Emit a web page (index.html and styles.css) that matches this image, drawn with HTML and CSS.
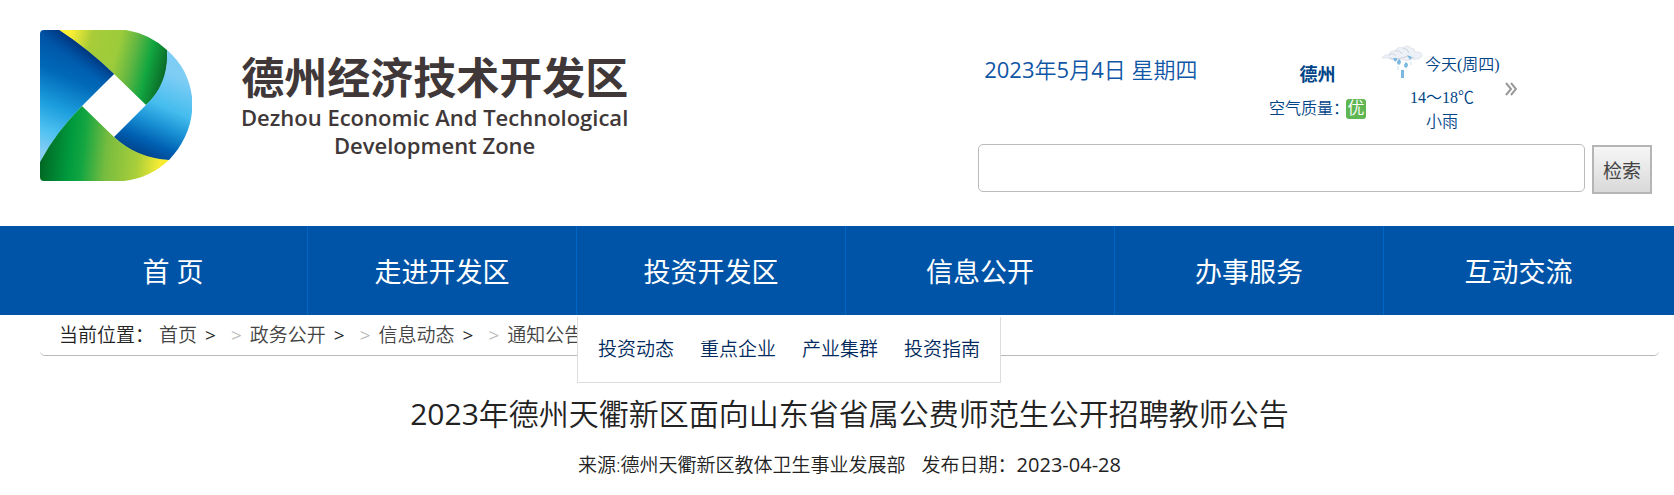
FILE: index.html
```html
<!DOCTYPE html>
<html lang="zh-CN">
<head>
<meta charset="utf-8">
<title>德州经济技术开发区</title>
<link rel="stylesheet" href="styles.css">
</head>
<body>
<header class="header">
  <div class="brand">
    <svg class="brand-mark" viewBox="0 0 152 151" aria-hidden="true">
      <defs>
        <linearGradient id="blueLeft" gradientUnits="userSpaceOnUse" x1="46" y1="18" x2="2" y2="122">
          <stop offset="0" stop-color="#0050a2"/><stop offset="0.3" stop-color="#0068b8"/><stop offset="0.58" stop-color="#1b9ddd"/><stop offset="0.8" stop-color="#4cc0f0"/><stop offset="1" stop-color="#86cef4"/>
        </linearGradient>
        <linearGradient id="blueEdge" gradientUnits="userSpaceOnUse" x1="50" y1="20" x2="38" y2="36">
          <stop offset="0" stop-color="#002b6e" stop-opacity="0.9"/><stop offset="1" stop-color="#004a9e" stop-opacity="0"/>
        </linearGradient>
        <linearGradient id="greenTop" gradientUnits="userSpaceOnUse" x1="20" y1="20" x2="124" y2="46">
          <stop offset="0.05" stop-color="#fff033"/><stop offset="0.26" stop-color="#a8cc38"/><stop offset="0.52" stop-color="#9ccb3b"/><stop offset="0.68" stop-color="#5fb642"/><stop offset="0.83" stop-color="#12a640"/><stop offset="1" stop-color="#0b6b28"/>
        </linearGradient>
        <linearGradient id="blueRight" gradientUnits="userSpaceOnUse" x1="132" y1="34" x2="92" y2="126">
          <stop offset="0.1" stop-color="#7dcdf5"/><stop offset="0.42" stop-color="#45bdee"/><stop offset="0.62" stop-color="#1990d4"/><stop offset="0.8" stop-color="#0060b2"/><stop offset="1" stop-color="#003b83"/>
        </linearGradient>
        <linearGradient id="greenBottom" gradientUnits="userSpaceOnUse" x1="0" y1="110" x2="129" y2="122">
          <stop offset="0" stop-color="#006420"/><stop offset="0.24" stop-color="#009b3e"/><stop offset="0.34" stop-color="#14a642"/><stop offset="0.52" stop-color="#76bc3f"/><stop offset="0.76" stop-color="#a9ce3a"/><stop offset="0.94" stop-color="#f8ec33"/>
        </linearGradient>
      </defs>
      <path d="M19 0H86Q110 4 127 20Q130 54 106 75L74 44Q46 18 19 0Z" fill="url(#greenTop)"/>
      <path d="M4 0H19Q48 19 74 44L42 76Q18 100 0 132V4Q0 0 4 0Z" fill="url(#blueLeft)"/>
      <path d="M4 0H19Q48 19 74 44L60 58Q34 30 4 14Z" fill="url(#blueEdge)"/>
      <path d="M127 20C160 48 161 97 129 130Q98 130 74 107L106 75Q129 53 127 20Z" fill="url(#blueRight)"/>
      <path d="M42 76L74 107Q97 128 129 130Q110 148 84 151H4Q0 151 0 147V132Q16 102 42 76Z" fill="url(#greenBottom)"/>
    </svg>
    <div class="brand-text">
      <div class="brand-name">德州经济技术开发区</div>
      <div class="brand-en">Dezhou Economic And Technological<br>Development Zone</div>
    </div>
  </div>
  <div class="tools">
    <div class="info">
      <div class="date"><span class="num">2023</span>年<span class="num">5</span>月<span class="num">4</span>日 星期四</div>
      <div class="city">
        <a class="city-name" href="#">德州</a>
        <div class="air">空气质量：<span class="badge">优</span></div>
      </div>
      <div class="forecast">
        <div class="today">
          <svg class="cloud" viewBox="0 0 42 38" aria-hidden="true">
            <path d="M1 14Q3 10 8 11Q9 6 14 7Q17 2 22 4Q26 0 30 4Q34 4 34 8Q41 8 41 11Q40 16 32 15Q26 18 20 15Q14 18 8 14Z" fill="#edf0f6" stroke="#e2e6ec"/>
            <path d="M8 11Q12 8 15 12M14 7Q19 6 21 10M22 4Q27 5 28 9M8 14Q14 17 20 14T33 14" fill="none" stroke="#ccd4de"/>
            <path d="M12 14h4v2l-2 2zM18 15q4 3 0 6q-4-2 0-6zM26 11l5 2-2 3zM25 18q4 3 0 6q-4-2 0-6zM20 26h3v8h-3z" fill="#79b8e0"/>
            <path d="M17 22v4M30 18v3" stroke="#e4eff6" stroke-width="2"/>
          </svg>
          <span>今天(周四)</span>
        </div>
        <div class="temp">14～18℃</div>
        <div class="sky">小雨</div>
      </div>
      <a class="more" href="#" aria-label="更多天气">
        <svg class="chevrons" viewBox="0 0 12 14" aria-hidden="true"><path d="M1 1L6 7L1 13M6 1L11 7L6 13" fill="none" stroke="#999" stroke-width="2"/></svg>
      </a>
    </div>
    <form class="search">
      <input class="search-box" type="text" aria-label="检索内容">
      <button class="search-button" type="button">检索</button>
    </form>
  </div>
</header>
<nav class="nav">
  <div class="nav-item"><a href="#">首 页</a></div>
  <div class="nav-item"><a href="#">走进开发区</a></div>
  <div class="nav-item"><a href="#">投资开发区</a>
    <div class="submenu">
      <a href="#">投资动态</a><a href="#">重点企业</a><a href="#">产业集群</a><a href="#">投资指南</a>
    </div>
  </div>
  <div class="nav-item"><a href="#">信息公开</a></div>
  <div class="nav-item"><a href="#">办事服务</a></div>
  <div class="nav-item"><a href="#">互动交流</a></div>
</nav>
<main class="main">
  <div class="crumbs">
    <span class="crumbs-label">当前位置：</span>
    <span class="crumb"><a href="#">首页</a><b>&gt;</b></span>
    <span class="crumb"><i>&gt;</i><a href="#">政务公开</a><b>&gt;</b></span>
    <span class="crumb"><i>&gt;</i><a href="#">信息动态</a><b>&gt;</b></span>
    <span class="crumb"><i>&gt;</i><a href="#">通知公告</a></span>
  </div>
  <h1 class="title"><span class="num">2023</span>年德州天衢新区面向山东省省属公费师范生公开招聘教师公告</h1>
  <div class="meta"><span>来源:德州天衢新区教体卫生事业发展部</span><span>发布日期：<time class="meta-date">2023-04-28</time></span></div>
</main>
</body>
</html>
```
FILE: styles.css
```css
* { box-sizing: border-box; }
body {
  margin: 0;
  background: #fff;
  color: #222;
  font-family: "Open Sans", "Noto Sans CJK SC", sans-serif;
  font-weight: 350;
  font-size: 19px;
}
a { color: inherit; text-decoration: none; }
.num { font-weight: 400; }

.header {
  display: flex;
  justify-content: space-between;
  padding: 30px 22px 32px 40px;
}
.brand { display: flex; gap: 49px; }
.brand-mark { width: 152px; height: 151px; margin-bottom: 13px; }
.brand-text { padding-top: 23px; color: #403838; text-align: center; white-space: nowrap; }
.brand-name { font-size: 43px; line-height: 50px; font-weight: 700; }
.brand-en { font-size: 22px; line-height: 28px; font-weight: 600; }

.tools { width: 41.8%; padding-top: 14px; }
.info { display: flex; height: 100px; color: #004488; font-family: "Liberation Serif", "Noto Sans CJK SC", serif; font-size: 16px; }
.date { padding: 9px 0 0 6px; color: #0f56a6; font-family: "Open Sans", "Noto Sans CJK SC", sans-serif; font-size: 22px; line-height: 32px; white-space: nowrap; }
.city { margin-left: auto; padding-top: 19px; text-align: center; }
.city-name { display: block; font-size: 18px; line-height: 24px; font-weight: 700; }
.air { display: flex; align-items: center; margin-top: 12px; line-height: 20px; }
.badge { width: 20px; margin-left: -3px; border-radius: 3px; background: #5fb653; color: #fff; font-size: 17px; text-align: center; }
.forecast { width: 124px; margin-left: 15px; }
.today { display: flex; align-items: center; gap: 2px; white-space: nowrap; }
.cloud { flex: none; width: 42px; height: 38px; }
.temp, .sky { width: 122px; line-height: 24px; text-align: center; }
.temp { margin-top: 4px; }
.more { margin: 38px 135px 0 0; }
.chevrons { display: block; width: 12px; height: 14px; }

.search { display: flex; gap: 7px; }
.search-box {
  flex: 1;
  height: 48px;
  padding: 0 12px;
  border: 1px solid #bbb;
  border-radius: 5px;
  background: #fff;
  font-size: 19px;
}
.search-button {
  width: 60px;
  height: 49px;
  margin-top: 1px;
  padding: 0;
  border: 2px solid #b5b5b5;
  background: linear-gradient(#f6f6f6, #d9d9d9);
  color: #444;
  font: 400 19px "Noto Sans CJK SC", sans-serif;
}

.nav {
  display: grid;
  grid-template-columns: repeat(6, 1fr);
  padding: 0 21px 0 39px;
  background: #0054a7;
  color: #fff;
  font-size: 27px;
  font-weight: 400;
}
.nav-item { position: relative; border-right: 1px solid #0066c4; line-height: 92px; height: 89px; text-align: center; }
.nav-item:last-child { border-right: 0; }
.submenu {
  position: absolute;
  top: 91px;
  left: 0;
  display: flex;
  gap: 26px;
  padding: 16px 20px 17px;
  border: 1px solid #ddd;
  border-top: 0;
  background: #fff;
  color: #002a5e;
  font-size: 19px;
  line-height: 32px;
  font-weight: 350;
  white-space: nowrap;
}

.main { padding: 0 15px 0 40px; }
.crumbs {
  display: flex;
  height: 41px;
  padding-left: 19px;
  border-bottom: 1px solid #b8b8b8;
  border-radius: 0 0 5px 5px;
  line-height: 40px;
  white-space: nowrap;
}
.crumbs-label { margin-right: 5px; }
.crumb { display: flex; gap: 8px; margin-right: 15px; }
.crumb a { color: #444; }
.crumb b { font-weight: 400; }
.crumb i { color: #bbb; font-style: normal; font-weight: 400; }
.title { margin: 34px 0 0; font-size: 30px; line-height: 48px; font-weight: 350; text-align: center; }
.meta { display: flex; justify-content: center; gap: 16px; margin-top: 12px; line-height: 30px; }
.meta-date { font-size: 20px; font-weight: 400; }
```
